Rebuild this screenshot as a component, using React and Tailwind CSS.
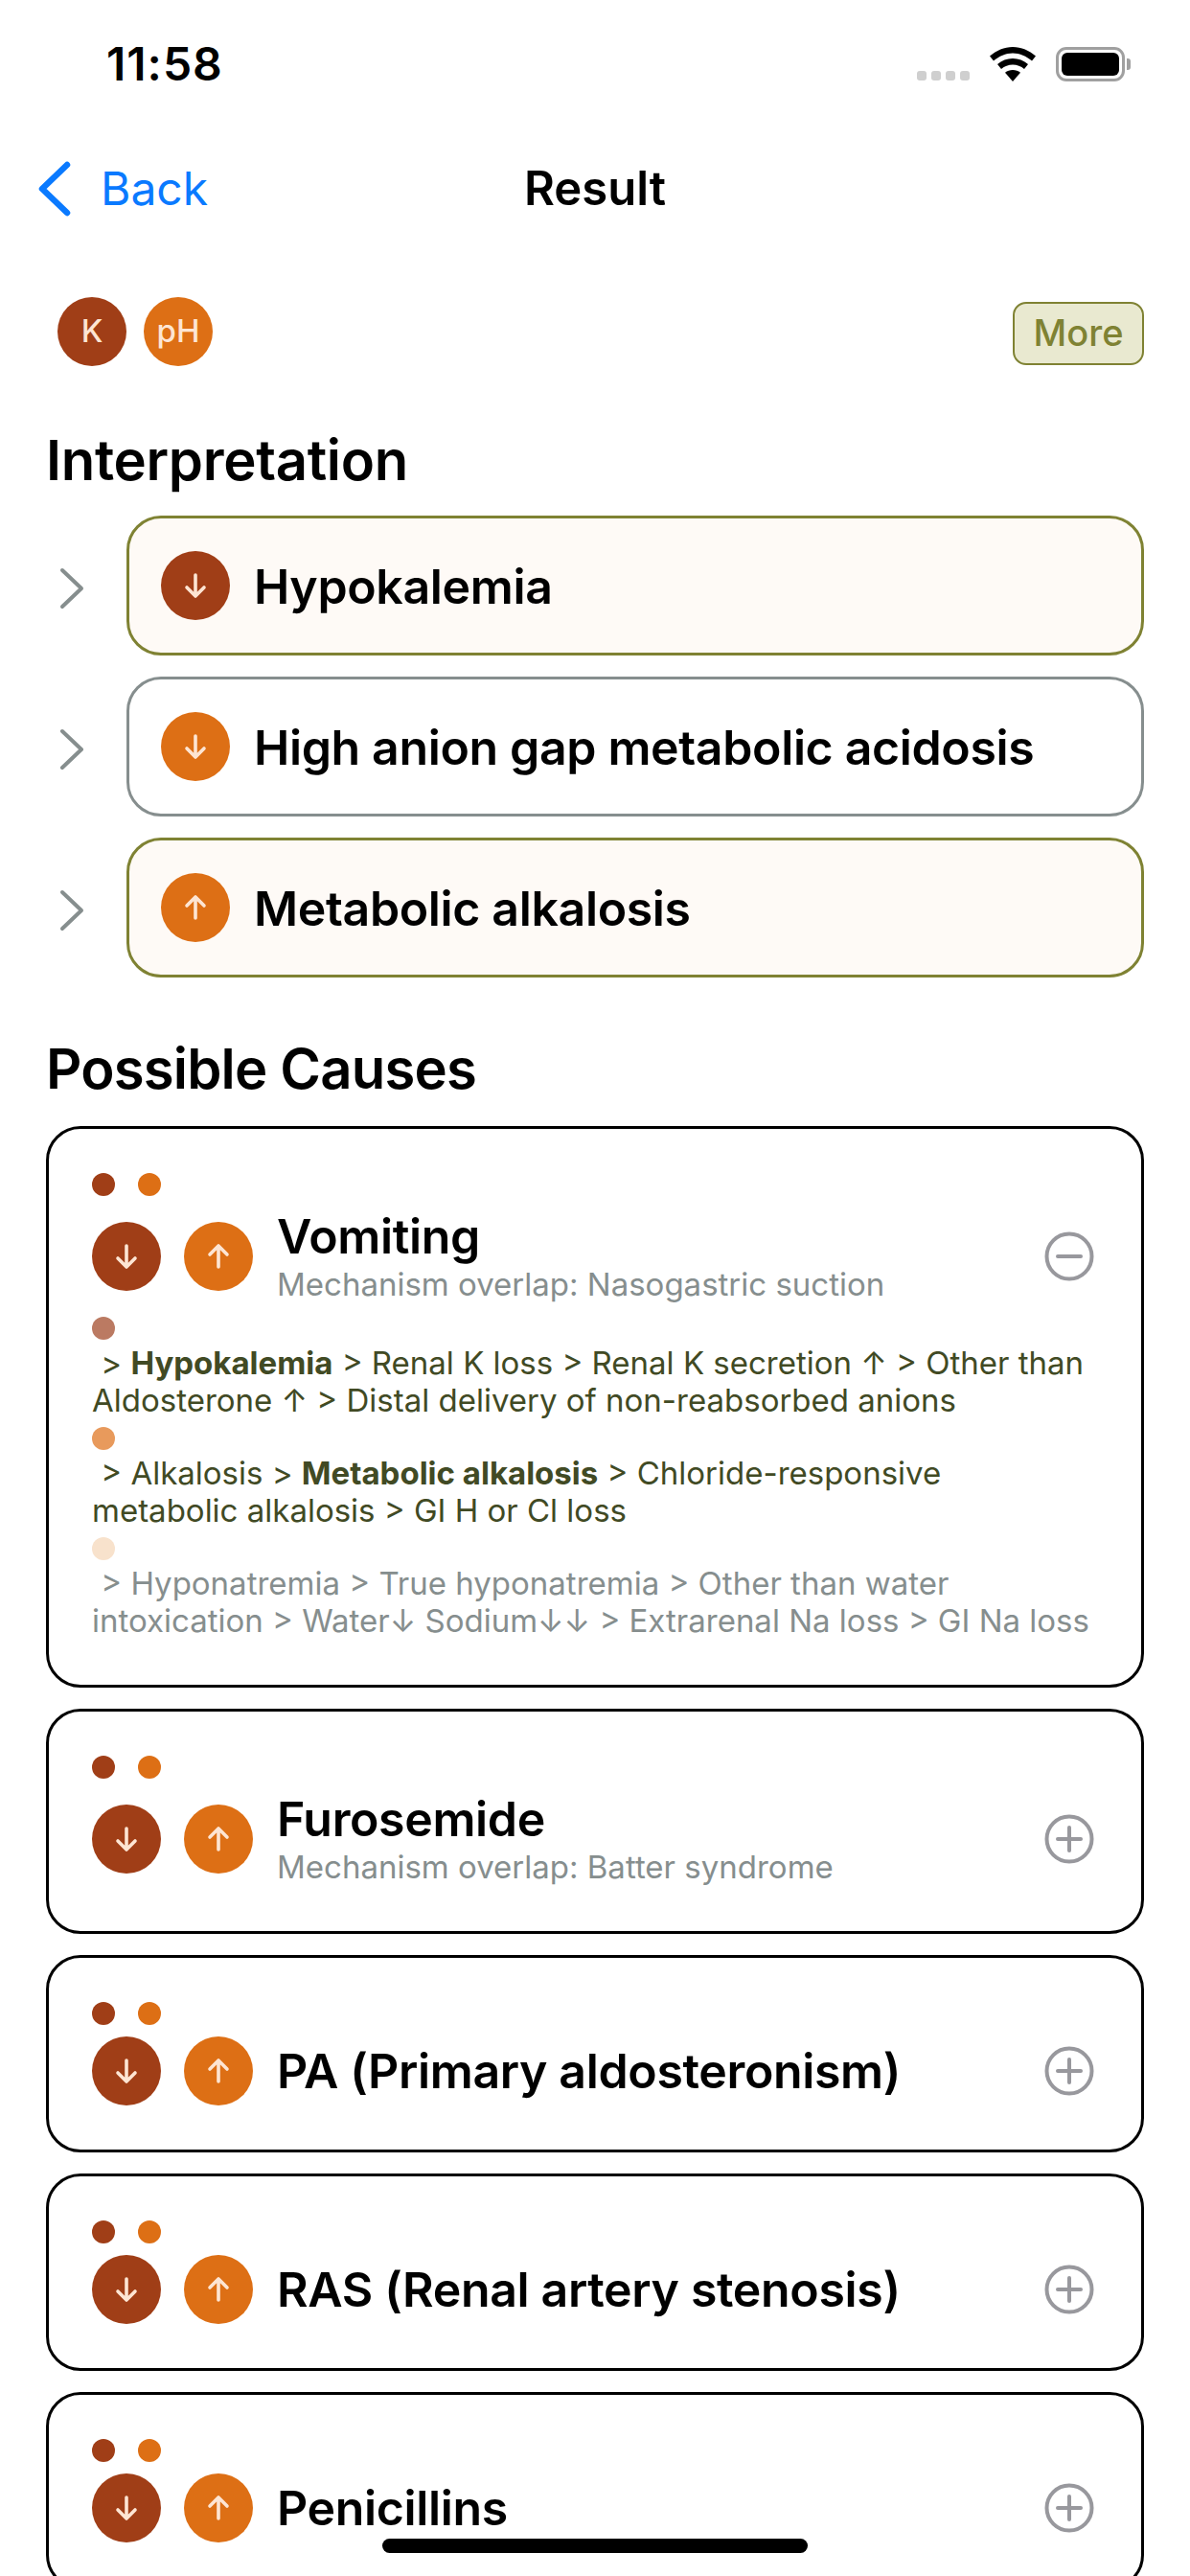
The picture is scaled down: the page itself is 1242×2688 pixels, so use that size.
import React from "react";

const BROWN = "bg-[#a03e17]";
const ORANGE = "bg-[#dd6f15]";

function Arrow({ up }) {
  return (
    <svg width="24" height="28" viewBox="0 0 24 28" fill="none" stroke="#fde5d3" strokeWidth="3.6" strokeLinecap="round" strokeLinejoin="round">
      {up ? <path d="M12 25V4M3 12l9-9 9 9" /> : <path d="M12 3v21M3 16l9 9 9-9" />}
    </svg>
  );
}

function Badge({ color, up }) {
  return (
    <div className={`w-[72px] h-[72px] rounded-full flex items-center justify-center shrink-0 ${color}`}>
      <Arrow up={up} />
    </div>
  );
}

function Chevron() {
  return (
    <svg width="26" height="44" viewBox="0 0 26 44" fill="none" stroke="#868e8e" strokeWidth="4" strokeLinecap="round" strokeLinejoin="round">
      <path d="M3 3l20 19L3 41" />
    </svg>
  );
}

function RoundIcon({ plus }) {
  return (
    <svg width="52" height="52" viewBox="0 0 52 52" fill="none" stroke="#98989d" strokeLinecap="round" className="shrink-0">
      <circle cx="26" cy="26" r="23.5" strokeWidth="4" />
      <path d="M14 26h24" strokeWidth="4" />
      {plus && <path d="M26 14v24" strokeWidth="4" />}
    </svg>
  );
}

function InterpRow({ color, up, label, active }) {
  return (
    <div className="flex items-center">
      <div className="w-[132px] shrink-0 pl-[62px] pt-[6px]">
        <Chevron />
      </div>
      <div
        className={`flex-1 h-[146px] rounded-[36px] border-[3px] flex items-center gap-[25px] pl-[33px] ${
          active ? "border-[#7f8233] bg-[#fefaf6]" : "border-[#868e8e] bg-white"
        }`}
      >
        <Badge color={color} up={up} />
        <span className="text-[50px] pt-[2px] font-semibold text-black tracking-[-0.35px]">{label}</span>
      </div>
    </div>
  );
}

function CauseCard({ title, sub, children, open }) {
  return (
    <div className="border-[3px] border-black rounded-[36px] pt-[46px] pb-[46px] pl-[45px] pr-[49px] bg-white">
      <div className="flex gap-[24px] mb-[12px]">
        <div className={`w-[24px] h-[24px] rounded-full ${BROWN}`} />
        <div className={`w-[24px] h-[24px] rounded-full ${ORANGE}`} />
      </div>
      <div className="flex items-center">
        <div className="flex gap-[24px] mr-[25px]">
          <Badge color={BROWN} />
          <Badge color={ORANGE} up />
        </div>
        <div className="flex-1 min-w-0">
          <div className="text-[50px] leading-[60px] font-semibold text-black tracking-[-0.35px]">{title}</div>
          {sub && <div className="text-[33px] leading-[41px] text-[#868e8e]">{sub}</div>}
        </div>
        <RoundIcon plus={!open} />
      </div>
      {children}
    </div>
  );
}

function Path({ dot, color, children }) {
  return (
    <div className={`pb-[8px] pr-[4px] ${color}`}>
      <div className={`w-[24px] h-[24px] rounded-full mb-[5px] ${dot}`} />
      <p className="text-[33px] leading-[39px] whitespace-pre-wrap">{children}</p>
    </div>
  );
}

export default function App() {
  return (
    <div className="relative w-[1242px] h-[2688px] overflow-hidden bg-white font-['Inter',sans-serif]">
      {/* Status bar */}
      <div className="h-[134px] flex items-center justify-between pl-[111px] pr-[62px]">
        <span className="text-[48px] font-semibold text-black tracking-[1px]">11:58</span>
        <div className="flex items-end gap-[21px]">
          <div className="flex gap-[5px] pb-[1px]">
            <div className="w-[10px] h-[10px] rounded-[3px] bg-[#cfcfcf]" />
            <div className="w-[10px] h-[10px] rounded-[3px] bg-[#cfcfcf]" />
            <div className="w-[10px] h-[10px] rounded-[3px] bg-[#cfcfcf]" />
            <div className="w-[10px] h-[10px] rounded-[3px] bg-[#cfcfcf]" />
          </div>
          <svg width="48" height="36" viewBox="0 0 48 36" fill="#000">
            <path d="M24 0c9 0 17 3.600 24 9.500l-4 5C38 9.500 31.500 6.500 24 6.500S10 9.500 4 14.500l-4-5C7 3.600 15 0 24 0z" />
            <path d="M24 12c6 0 11.500 2.200 16 6l-4 5c-3.400-2.800-7.500-4.500-12-4.500S15.400 20.200 12 23l-4-5c4.500-3.800 10-6 16-6z" />
            <path d="M24 24c3 0 5.800 1 8 2.800L24 36l-8-9.200C18.200 25 21 24 24 24z" />
          </svg>
          <div className="flex items-center gap-[2px]">
            <div className="w-[72px] h-[36px] rounded-[11px] border-[3px] border-[#a0a0a0] p-[3px]">
              <div className="w-full h-full rounded-[6px] bg-black" />
            </div>
            <div className="w-[4px] h-[12px] rounded-r-[3px] bg-[#a0a0a0]" />
          </div>
        </div>
      </div>

      {/* Nav */}
      <div className="relative h-[126px] flex items-center justify-center">
        <div className="absolute left-[40px] inset-y-0 flex items-center gap-[31px]">
          <svg width="34" height="58" viewBox="0 0 34 58" fill="none" stroke="#0a7aff" strokeWidth="6.5" strokeLinecap="round" strokeLinejoin="round">
            <path d="M30 4L4 29l26 25" />
          </svg>
          <span className="text-[48px] text-[#0a7aff]">Back</span>
        </div>
        <span className="text-[49px] font-semibold text-black">Result</span>
      </div>

      {/* Selected items */}
      <div className="mt-[50px] h-[72px] flex items-center pl-[60px] pr-[48px]">
        <div className={`w-[72px] h-[72px] rounded-full flex items-center justify-center text-[33px] font-medium text-[#fde5d3] ${BROWN}`}>K</div>
        <div className={`ml-[18px] w-[72px] h-[72px] rounded-full flex items-center justify-center text-[33px] font-medium text-[#fde5d3] ${ORANGE}`}>pH</div>
        <div className="ml-auto mt-[3px] w-[137px] h-[66px] rounded-[14px] border-2 border-[#7f8233] bg-[#e9e9d0] flex items-center justify-center text-[38px] font-medium text-[#7f8233]">
          More
        </div>
      </div>

      <h2 className="mt-[58px] mb-[18px] h-[80px] flex items-center pl-[48px] text-[58px] font-semibold text-black tracking-[-0.3px]">Interpretation</h2>

      <div className="flex flex-col gap-[22px] pr-[48px]">
        <InterpRow color={BROWN} label="Hypokalemia" active />
        <InterpRow color={ORANGE} label="High anion gap metabolic acidosis" />
        <InterpRow color={ORANGE} up label="Metabolic alkalosis" active />
      </div>

      <h2 className="mt-[55px] mb-[20px] h-[80px] flex items-center pl-[48px] text-[58px] font-semibold text-black tracking-[-0.8px]">Possible Causes</h2>

      <div className="flex flex-col gap-[22px] px-[48px]">
        <CauseCard title="Vomiting" sub="Mechanism overlap: Nasogastric suction" open>
          <div className="mt-[13px] -mb-[7px]">
            <Path dot="bg-[#bb7a62]" color="text-[#414a24]">
              {" > "}<b className="font-bold">Hypokalemia</b>{" > Renal K loss > Renal K secretion ↑ > Other than Aldosterone ↑ > Distal delivery of non-reabsorbed anions"}
            </Path>
            <Path dot="bg-[#e89a5c]" color="text-[#414a24]">
              {" > Alkalosis > "}<b className="font-bold">Metabolic alkalosis</b>{" > Chloride-responsive metabolic alkalosis > GI H or Cl loss"}
            </Path>
            <Path dot="bg-[#f8e2cc]" color="text-[#868e8e]">
              {" > Hyponatremia > True hyponatremia > Other than water intoxication > Water↓ Sodium↓↓ > Extrarenal Na loss > GI Na loss"}
            </Path>
          </div>
        </CauseCard>
        <CauseCard title="Furosemide" sub="Mechanism overlap: Batter syndrome" />
        <CauseCard title="PA (Primary aldosteronism)" />
        <CauseCard title="RAS (Renal artery stenosis)" />
        <CauseCard title="Penicillins" />
      </div>

      {/* Home indicator */}
      <div className="absolute left-[399px] top-[2649px] w-[444px] h-[15px] rounded-full bg-black" />
    </div>
  );
}
